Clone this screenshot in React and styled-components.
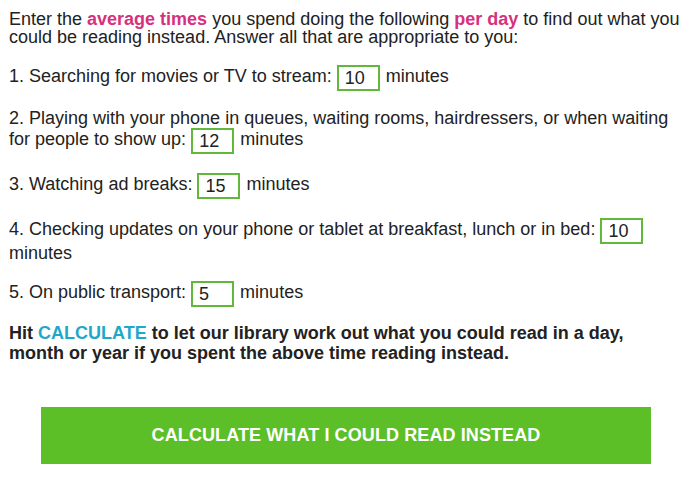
import styled, { createGlobalStyle } from 'styled-components';

const GlobalStyle = createGlobalStyle`
  body {
    margin: 0;
    background: #ffffff;
    font-family: "Liberation Sans", Arial, sans-serif;
    color: #222222;
  }
`;

const Page = styled.div`
  width: 672px;
  padding: 10px 0 0 9px;
  font-size: 18px;
  line-height: 18px;
`;

const Intro = styled.p`
  margin: 0 0 18px;
`;

const Pink = styled.b`
  color: #d6317f;
`;

const Cyan = styled.span`
  color: #1fa8c8;
`;

const Question = styled.p`
  margin: 0 0 18px;
`;

const Minutes = styled.input`
  box-sizing: border-box;
  width: 43px;
  height: 26px;
  margin: 1px 1px 0 0;
  padding: 0 0 0 6px;
  border: 2px solid #62b83a;
  font: inherit;
  color: #222222;
  vertical-align: middle;
  background: #ffffff;
  outline: none;
`;

const Summary = styled.p`
  margin: -2px 0 0;
  font-weight: 700;
  line-height: 20px;
`;

const CalcButton = styled.button`
  display: block;
  width: 610px;
  height: 57px;
  margin: 44px 0 0 32px;
  border: 0;
  background: #5cbf27;
  color: #ffffff;
  font-family: "Liberation Sans", Arial, sans-serif;
  font-size: 18px;
  font-weight: 700;
  letter-spacing: 0.1px;
  cursor: pointer;
`;

const questions = [
  { before: '1. Searching for movies or TV to stream:', value: '10' },
  {
    before:
      '2. Playing with your phone in queues, waiting rooms, hairdressers, or when waiting for people to show up:',
    value: '12'
  },
  { before: '3. Watching ad breaks:', value: '15' },
  {
    before: '4. Checking updates on your phone or tablet at breakfast, lunch or in bed:',
    value: '10'
  },
  { before: '5. On public transport:', value: '5' }
];

export default function App() {
  return (
    <>
      <GlobalStyle />
      <Page>
        <Intro>
          Enter the <Pink>average times</Pink> you spend doing the following{' '}
          <Pink>per day</Pink> to find out what you could be reading instead. Answer all
          that are appropriate to you:
        </Intro>
        {questions.map((q, i) => (
          <Question key={i}>
            {q.before} <Minutes type="text" defaultValue={q.value} /> minutes
          </Question>
        ))}
        <Summary>
          Hit <Cyan>CALCULATE</Cyan> to let our library work out what you could read in a
          day, month or year if you spent the above time reading instead.
        </Summary>
        <CalcButton>CALCULATE WHAT I COULD READ INSTEAD</CalcButton>
      </Page>
    </>
  );
}
